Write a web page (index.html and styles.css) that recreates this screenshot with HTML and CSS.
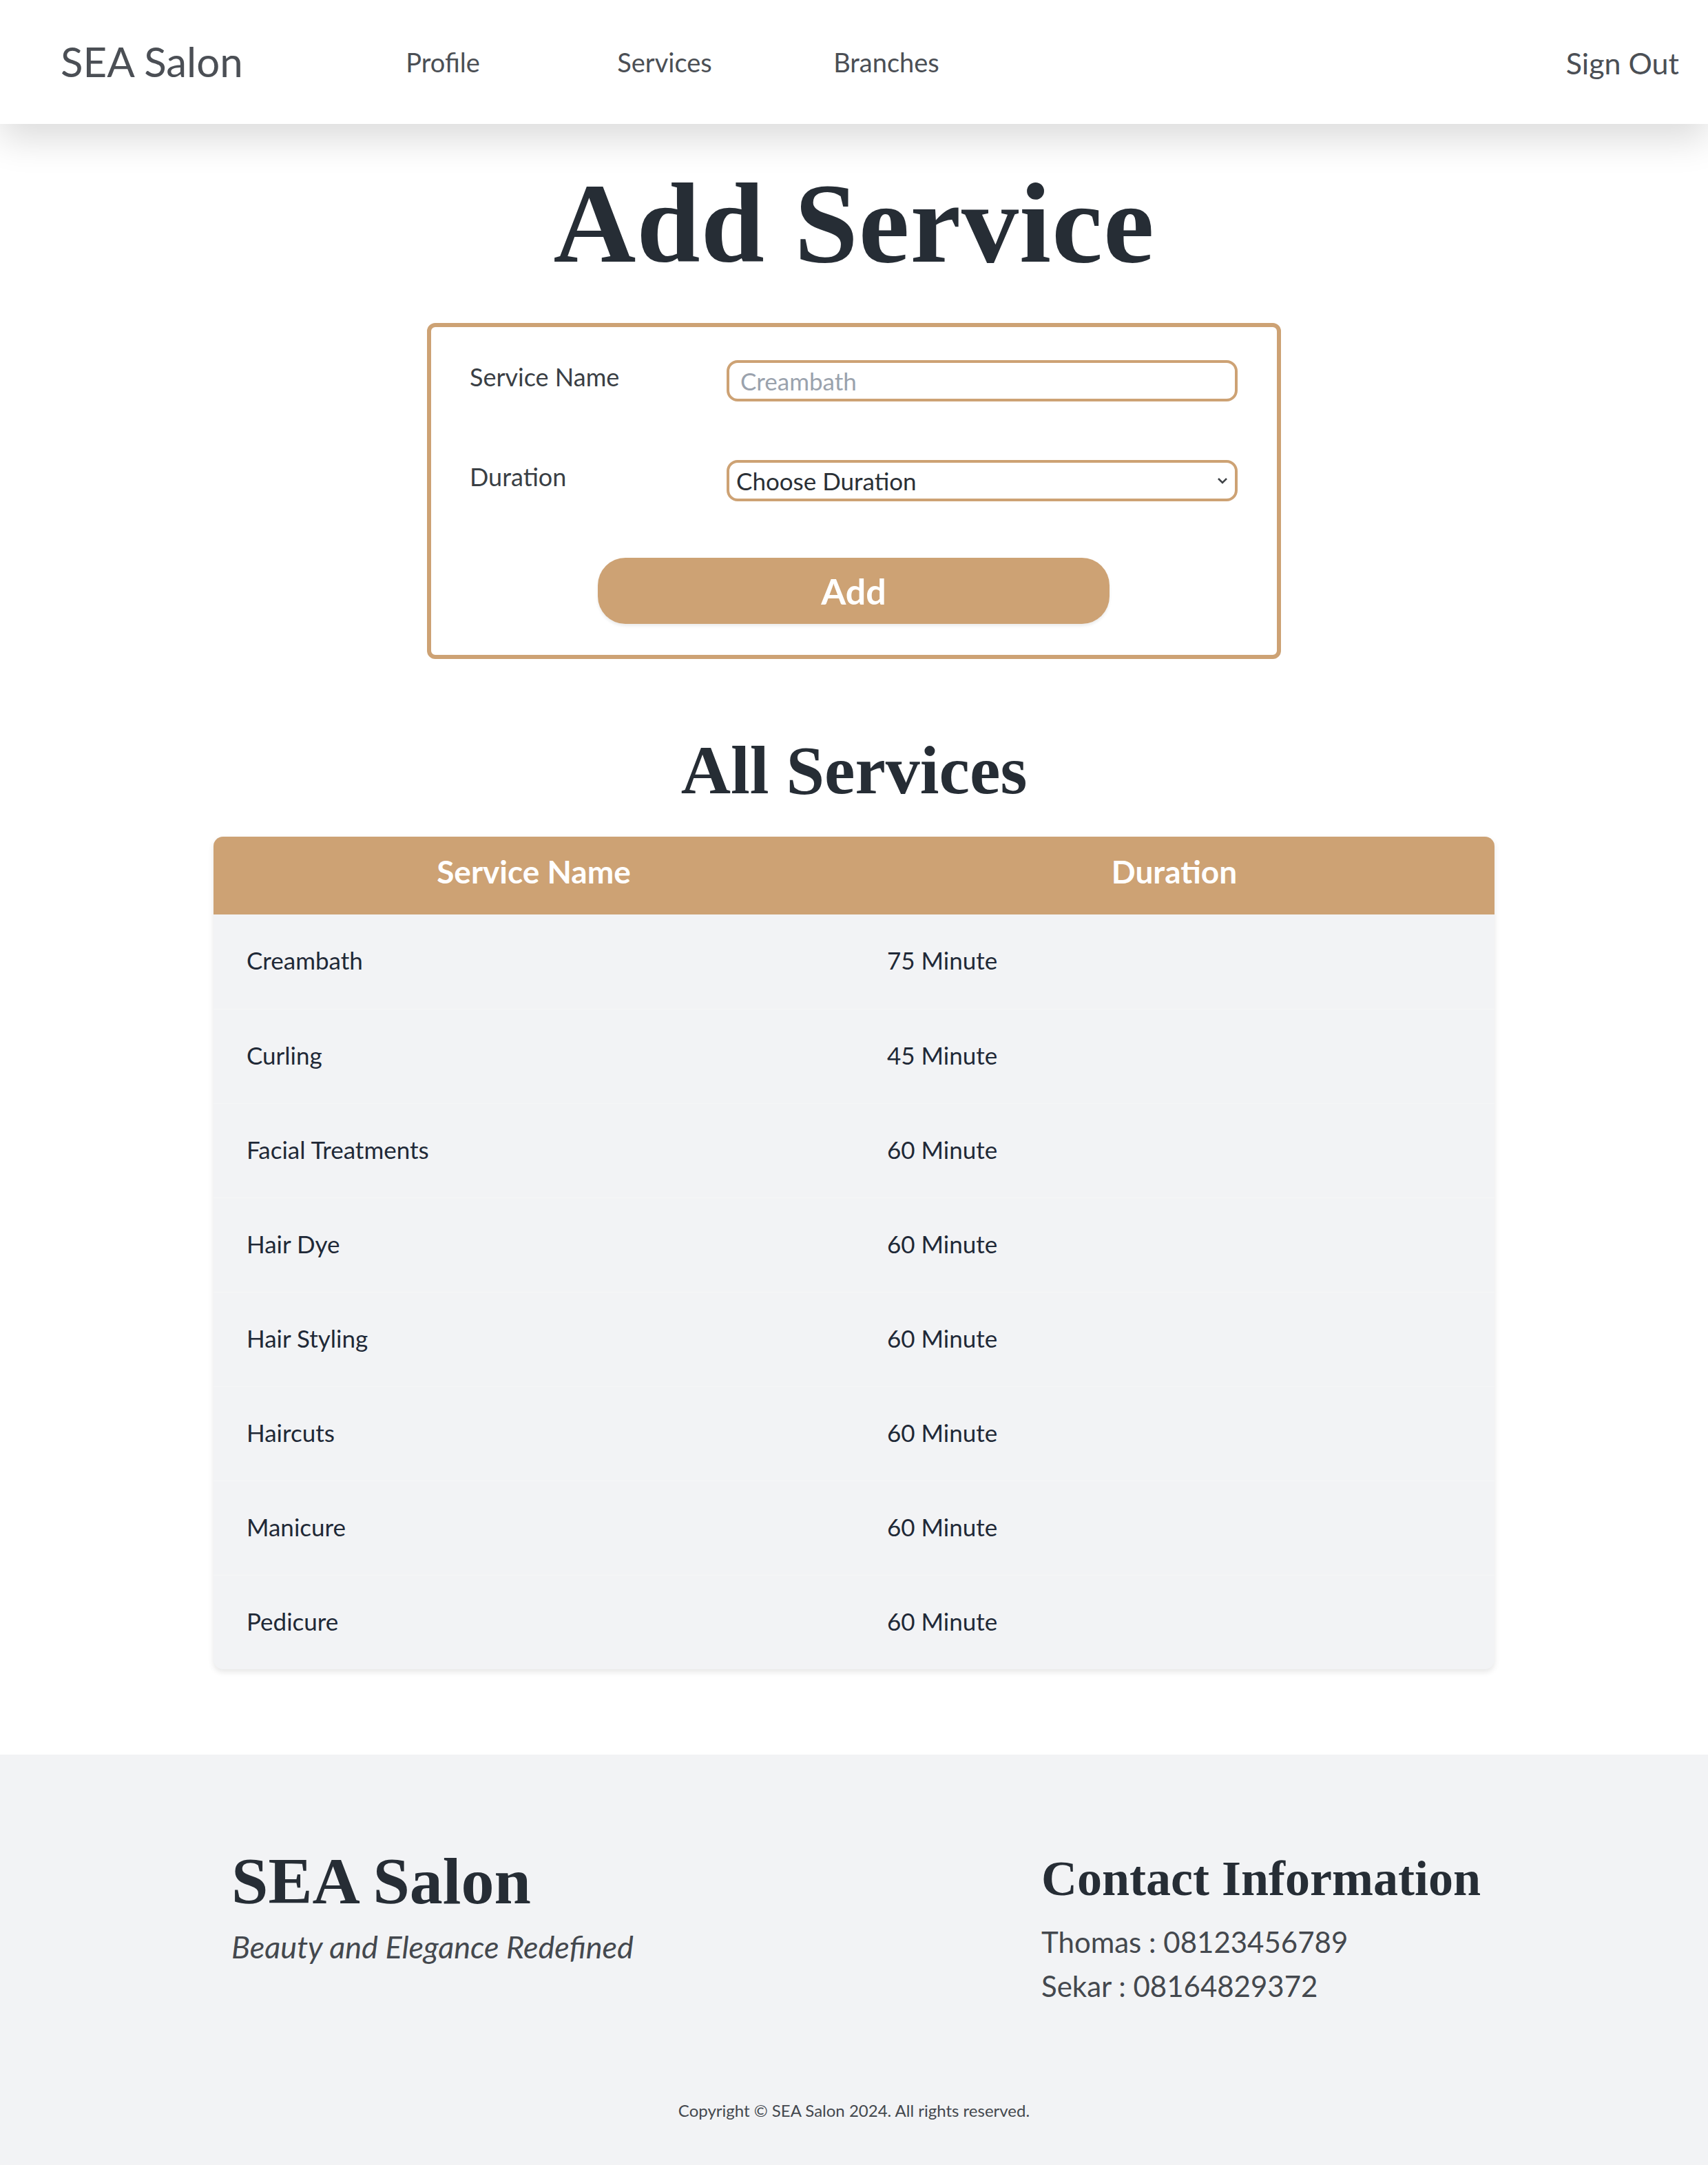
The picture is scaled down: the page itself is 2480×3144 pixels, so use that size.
FILE: index.html
```html
<!DOCTYPE html>
<html lang="en">
<head>
<meta charset="utf-8">
<title>SEA Salon - Add Service</title>
<link rel="stylesheet" href="styles.css">
</head>
<body>
<nav class="navbar">
  <div class="brand">SEA Salon</div>
  <ul class="nav-links">
    <li><a href="#">Profile</a></li>
    <li><a href="#">Services</a></li>
    <li><a href="#">Branches</a></li>
  </ul>
  <a class="signout" href="#">Sign Out</a>
</nav>

<main class="main">
  <h1 class="page-title">Add Service</h1>
  <form class="service-form">
    <div class="form-row">
      <label class="form-label" for="sname">Service Name</label>
      <input class="form-input" id="sname" type="text" placeholder="Creambath">
    </div>
    <div class="form-row">
      <label class="form-label" for="duration">Duration</label>
      <div class="select-wrap">
        <select class="form-select" id="duration">
          <option>Choose Duration</option>
        </select>
        <svg class="chevron" viewBox="0 0 16 10" width="16" height="10"><path d="M2 2 L8 8 L14 2" fill="none" stroke="#3f4347" stroke-width="2.6"/></svg>
      </div>
    </div>
    <div class="form-actions">
      <button class="add-btn" type="button">Add</button>
    </div>
  </form>

  <h2 class="section-title">All Services</h2>
  <div class="table-wrap">
    <table class="services-table">
      <thead>
        <tr><th>Service Name</th><th>Duration</th></tr>
      </thead>
      <tbody>
        <tr><td>Creambath</td><td>75 Minute</td></tr>
        <tr><td>Curling</td><td>45 Minute</td></tr>
        <tr><td>Facial Treatments</td><td>60 Minute</td></tr>
        <tr><td>Hair Dye</td><td>60 Minute</td></tr>
        <tr><td>Hair Styling</td><td>60 Minute</td></tr>
        <tr><td>Haircuts</td><td>60 Minute</td></tr>
        <tr><td>Manicure</td><td>60 Minute</td></tr>
        <tr><td>Pedicure</td><td>60 Minute</td></tr>
      </tbody>
    </table>
  </div>
</main>

<footer class="footer">
  <div class="footer-grid">
    <div class="footer-brand">
      <h3 class="footer-title">SEA Salon</h3>
      <p class="tagline">Beauty and Elegance Redefined</p>
    </div>
    <div class="footer-contact">
      <h3 class="contact-title">Contact Information</h3>
      <p class="contact-line">Thomas : 08123456789</p>
      <p class="contact-line">Sekar : 08164829372</p>
    </div>
  </div>
  <p class="copyright">Copyright © SEA Salon 2024. All rights reserved.</p>
</footer>
</body>
</html>
```

FILE: styles.css
```css
* { box-sizing: border-box; }
html, body { margin: 0; padding: 0; }
body {
  font-family: Lato, "Open Sans", sans-serif;
  background: #ffffff;
  color: #1f2937;
}

/* NAV */
.navbar {
  height: 180px;
  display: flex;
  align-items: center;
  padding: 0 42px 0 88px;
  background: #fff;
  box-shadow: 0 22px 50px rgba(0,0,0,0.14);
  position: relative;
  z-index: 2;
}
.brand {
  font-size: 60px;
  color: #4b4f55;
  width: 394px;
  padding-bottom: 2px;
}
.nav-links {
  list-style: none;
  margin: 0;
  padding: 0;
  display: flex;
}
.nav-links li { width: 322px; text-align: center; }
.nav-links a, .signout {
  text-decoration: none;
  color: #4b4f55;
  font-size: 38px;
}
.signout { margin-left: auto; font-size: 43px; padding-top: 2px; }

/* MAIN */
.main { display: flex; flex-direction: column; align-items: center; }
.page-title {
  font-family: "Liberation Serif", "DejaVu Serif", serif;
  font-weight: 700;
  font-size: 166px;
  line-height: 1;
  color: #262d35;
  margin: 61px 0 0;
  letter-spacing: 1px;
}
.service-form {
  margin-top: 62px;
  width: 1240px;
  border: 6px solid #cda274;
  border-radius: 12px;
  padding: 48px 57px 45px 56px;
  display: flex;
  flex-direction: column;
}
.form-row {
  display: grid;
  grid-template-columns: 373px 1fr;
  align-items: start;
}
.form-row + .form-row { margin-top: 85px; }
.form-label {
  font-size: 36px;
  line-height: 48px;
  color: #3a3f45;
}
.form-input, .form-select {
  width: 100%;
  height: 60px;
  border: 4px solid #cda274;
  border-radius: 16px;
  font-family: Lato, "Open Sans", sans-serif;
  font-size: 35px;
  background: #fff;
  outline: none;
}
.form-input { padding: 0 16px; color: #1f2937; }
.form-input::placeholder { color: #9aa2ad; }
.select-wrap { position: relative; }
.form-select {
  appearance: none;
  -webkit-appearance: none;
  padding: 0 10px;
  color: #2a2f35;
}
.chevron { position: absolute; right: 14px; top: 25px; }
.form-actions { display: flex; justify-content: center; margin-top: 82px; }
.add-btn {
  width: 743px;
  height: 96px;
  border: none;
  border-radius: 40px;
  background: #cda274;
  color: #fff;
  font-family: Lato, "Open Sans", sans-serif;
  font-weight: 700;
  font-size: 52px;
  box-shadow: 0 3px 4px rgba(0,0,0,0.08);
}

.section-title {
  font-family: "Liberation Serif", "DejaVu Serif", serif;
  font-weight: 700;
  font-size: 100px;
  line-height: 1;
  color: #262d35;
  margin: 112px 0 0;
}
.table-wrap {
  margin-top: 46px;
  width: 1860px;
  border-radius: 14px;
  overflow: hidden;
  box-shadow: 0 4px 8px rgba(0,0,0,0.1);
  background: #f2f3f5;
}
.services-table {
  width: 100%;
  border-collapse: collapse;
  table-layout: fixed;
}
.services-table th {
  background: #cda274;
  color: #fff;
  font-weight: 700;
  font-size: 46px;
  height: 113px;
  text-align: center;
  padding: 0 48px 12px;
}
.services-table td {
  height: 137px;
  padding: 0 48px 4px;
  font-size: 35px;
  color: #1f2937;
  border-bottom: 1px solid #f5f6f7;
}
.services-table tbody tr:last-child td { border-bottom: none; }

/* FOOTER */
.footer {
  margin-top: 124px;
  background: #f2f3f5;
  padding: 140px 0 76px;
}
.footer-grid {
  display: grid;
  grid-template-columns: 1176px 1fr;
  padding: 0 200px 0 336px;
}
.footer-title {
  font-family: "Liberation Serif", "DejaVu Serif", serif;
  font-weight: 700;
  font-size: 96px;
  line-height: 1;
  color: #262d35;
  margin: -4px 0 0;
  white-space: nowrap;
}
.tagline {
  margin: 20px 0 0;
  font-style: italic;
  font-size: 45px;
  color: #44484e;
  white-space: nowrap;
}
.contact-title {
  font-family: "Liberation Serif", "DejaVu Serif", serif;
  font-weight: 700;
  font-size: 72px;
  line-height: 1;
  color: #262d35;
  margin: 4px 0 0;
  white-space: nowrap;
}
.contact-line {
  margin: 0;
  font-size: 42px;
  line-height: 64px;
  color: #44484e;
  white-space: nowrap;
}
.contact-title + .contact-line { margin-top: 24px; }
.copyright {
  text-align: center;
  font-size: 24px;
  color: #44484e;
  margin: 134px 0 0;
}
```
